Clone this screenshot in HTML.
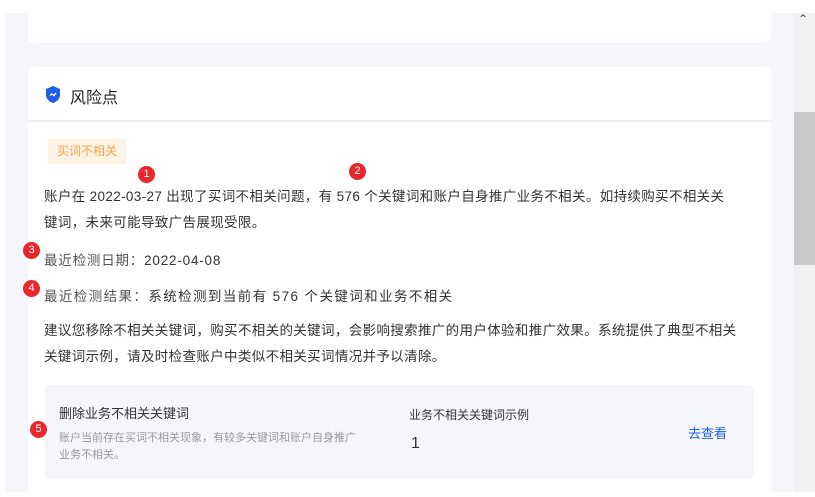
<!DOCTYPE html>
<html><head><meta charset="utf-8"><style>
*{margin:0;padding:0;box-sizing:border-box}
body{width:815px;height:492px;overflow:hidden;background:#fff;font-family:"Liberation Sans","Noto Sans CJK SC",sans-serif;position:relative;color:#333}
.bg{position:absolute;left:5px;top:13px;width:789px;height:479px;background:#f5f6fa}
.card1{position:absolute;left:28px;top:0;width:743px;height:43px;background:#fff;border-radius:0 0 6px 6px}
.card2{position:absolute;left:28px;top:67px;width:743px;height:430px;background:#fff;border-radius:6px}
.hdr{position:absolute;left:0;top:0;width:743px;height:55px;border-bottom:2px solid #eef0f5}
.title{position:absolute;left:42px;top:17px;font-size:16px;color:#222}
.abs{position:absolute;white-space:nowrap;font-size:13.5px;letter-spacing:0.35px}
.tag{position:absolute;left:20px;top:72px;width:78px;height:25px;background:#fff3e6;color:#f5a34a;font-size:12px;line-height:25px;text-align:center;border-radius:2px}
.b{position:absolute;width:17px;height:17px;border-radius:50%;background:#e8262b;color:#fff;font-size:11px;line-height:17px;text-align:center}
.box{position:absolute;left:17px;top:318px;width:709px;height:93px;background:#f5f6fa;border-radius:4px}
.box .abs{letter-spacing:0}
.sb{position:absolute;left:794px;top:13px;width:21px;height:479px;background:#f1f1f1}
.thumb{position:absolute;left:794px;top:112px;width:21px;height:153px;background:#c9c9c9}
</style></head><body>
<div class="bg"></div>
<div class="card1"></div>
<div class="card2">
 <div class="hdr">
  <svg style="position:absolute;left:17px;top:19px" width="16" height="17" viewBox="0 0 16 17"><path d="M8 0L15 3V9C15 13 11.5 16 8 17C4.5 16 1 13 1 9V3Z" fill="#1f5ee8"/><path d="M5 9.5L7 8L9 9.5L11 7" stroke="#fff" stroke-width="1.4" fill="none"/></svg>
  <div class="title">风险点</div>
 </div>
 <div class="tag">买词不相关</div>
 <div class="abs" style="left:16px;top:117px;line-height:26px;white-space:normal;width:694px;color:#333">账户在 2022-03-27 出现了买词不相关问题，有 576 个关键词和账户自身推广业务不相关。如持续购买不相关关键词，未来可能导致广告展现受限。</div>
 <div class="abs" style="left:16px;top:182px;letter-spacing:0.8px"><span style="color:#555">最近检测日期：</span>2022-04-08</div>
 <div class="abs" style="left:16px;top:218px;letter-spacing:1.4px"><span style="color:#555">最近检测结果：</span>系统检测到当前有 576 个关键词和业务不相关</div>
 <div class="abs" style="left:16px;top:251px;line-height:26px;white-space:normal;width:700px">建议您移除不相关关键词，购买不相关的关键词，会影响搜索推广的用户体验和推广效果。系统提供了典型不相关关键词示例，请及时检查账户中类似不相关买词情况并予以清除。</div>
 <div class="box">
  <div class="abs" style="left:14px;top:18px;font-size:13px;color:#333">删除业务不相关关键词</div>
  <div class="abs" style="left:14px;top:45px;font-size:11px;line-height:17px;white-space:normal;width:302px;color:#999">账户当前存在买词不相关现象，有较多关键词和账户自身推广业务不相关。</div>
  <div class="abs" style="left:364px;top:21px;font-size:12px;color:#333">业务不相关关键词示例</div>
  <div class="abs" style="left:366px;top:50px;font-size:16px;color:#333">1</div>
  <div class="abs" style="left:643px;top:38px;font-size:13px;color:#1f5ee8">去查看</div>
 </div>
</div>
<div class="b" style="left:138px;top:166px">1</div>
<div class="b" style="left:349px;top:163px">2</div>
<div class="b" style="left:23px;top:242px">3</div>
<div class="b" style="left:23px;top:280px">4</div>
<div class="b" style="left:30px;top:421px">5</div>
<div class="sb"></div>
<div class="thumb"></div>
<div class="abs" style="left:798px;top:12px;font-size:12px;color:#444">&#8963;</div>
</body></html>
